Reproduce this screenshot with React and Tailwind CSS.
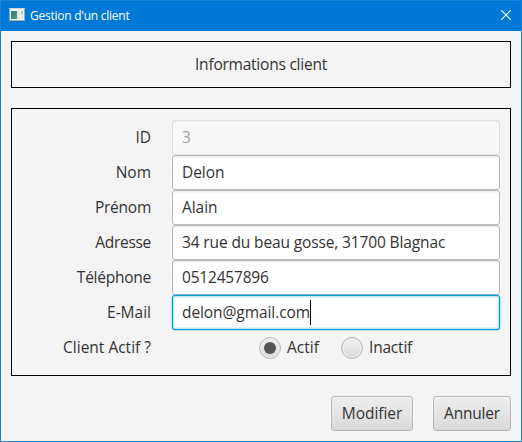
import React from "react";

const fields = [
  { label: "ID", value: "3", state: "disabled", ls: "tracking-[0px]", vs: "tracking-[0px]" },
  { label: "Nom", value: "Delon", state: "normal", ls: "tracking-[0px]", vs: "tracking-[-0.05px]" },
  { label: "Prénom", value: "Alain", state: "normal", ls: "tracking-[-0.25px]", vs: "tracking-[-0.05px]" },
  { label: "Adresse", value: "34 rue du beau gosse, 31700 Blagnac", state: "normal", ls: "tracking-[-0.3px]", vs: "tracking-[-0.13px]" },
  { label: "Téléphone", value: "0512457896", state: "normal", ls: "tracking-[-0.25px]", vs: "tracking-[-0.2px]" },
  { label: "E-Mail", value: "delon@gmail.com", state: "focused", ls: "tracking-[0px]", vs: "tracking-[-0.08px]" },
];

const boxStyles = {
  normal: "border-[#bababa] bg-white shadow-[inset_0_2px_2px_-1px_#e4e4e4]",
  disabled: "border-[#dddddd] bg-[#f8f8f8] text-[#a0a0a0] shadow-[inset_0_2px_2px_-1px_#eeeeee]",
  focused: "border-[#039ed3] bg-white shadow-[inset_0_0_0_1px_#c4e6f3,inset_0_0_0_2px_#e3f4fa,0_0_0_0.5px_#039ed380]",
};

function WindowIcon() {
  return (
    <svg width="16" height="14" viewBox="0 0 16 14" className="mb-[2px] block">
      <defs>
        <linearGradient id="pane" x1="0" y1="0" x2="1" y2="1">
          <stop offset="0" stopColor="#4a6f8e" />
          <stop offset="1" stopColor="#3da566" />
        </linearGradient>
      </defs>
      <rect x="0.5" width="15" height="13" rx="0.5" fill="#f1f1ef" />
      <rect x="0.5" width="15" height="1" fill="#d6d2cd" />
      <rect x="0.5" y="12" width="15" height="1" fill="#aaa9a5" />
      <rect x="2" y="3" width="6" height="8" fill="url(#pane)" />
      <rect x="8" y="3" width="3" height="8" fill="#e3e5e6" />
      <rect x="12" y="3" width="2" height="8" fill="#e3e8e5" />
      <rect x="12" y="3" width="2" height="3" fill="#9bcbb0" />
    </svg>
  );
}

function Radio({ label, checked, className }) {
  return (
    <div className="flex h-[22px] items-start gap-[6px]">
      <span className="flex size-[22px] items-center justify-center rounded-full border border-[#b8b8b8] bg-linear-to-b from-[#f0f0f0] to-[#dadada] shadow-[inset_0_0_0_1px_#eeeeee]">
        {checked && <span className="size-3 rounded-full bg-[#555555]" />}
      </span>
      <span className={className}>{label}</span>
    </div>
  );
}

export default function App() {
  return (
    <div className="flex h-[442px] w-[522px] flex-col border border-[#1883d7] bg-[#f4f4f4] font-['Open_Sans','Noto_Sans',sans-serif] text-[15.5px] leading-5 whitespace-nowrap text-[#333333]">
      <header className="flex h-[30px] shrink-0 items-center bg-[#0078d7] pr-[10px] pl-2 text-white">
        <WindowIcon />
        <span className="ml-[5px] text-[12px] tracking-[-0.25px]">Gestion d'un client</span>
        <svg width="10" height="10" viewBox="0 0 10 10" className="mb-[2px] ml-auto" stroke="white" strokeWidth="1.1">
          <path d="M0 0 10 10M10 0 0 10" />
        </svg>
      </header>
      <main className="flex flex-col px-[10px] pt-[10px]">
        <section className="flex h-[47px] items-center justify-center border border-black">
          <span className="pb-px tracking-[-0.23px]">Informations client</span>
        </section>
        <section className="mt-5 h-[268px] border border-black pt-[11px] pr-[10px]">
          {fields.map((f) => (
            <div key={f.label} className="flex h-[35px] items-center">
              <div className="flex w-[139px] justify-end pb-px">
                <span className={f.ls}>{f.label}</span>
              </div>
              <div className={"ml-[21px] flex h-[35px] w-[328px] items-center rounded-[3px] border pl-[9px] " + boxStyles[f.state]}>
                <span className={"pb-px " + f.vs}>{f.value}</span>
                {f.state === "focused" && <span className="h-[25px] w-px bg-black" />}
              </div>
            </div>
          ))}
          <div className="flex h-[35px] items-start pt-[7px]">
            <div className="flex w-[139px] justify-end">
              <span className="tracking-[0px]">Client Actif ?</span>
            </div>
            <div className="ml-[108px] flex">
              <div className="w-[82px]">
                <Radio label="Actif" checked className="tracking-[0px]" />
              </div>
              <Radio label="Inactif" className="tracking-[-0.2px]" />
            </div>
          </div>
        </section>
        <footer className="mt-5 flex justify-end gap-5">
          <button className="flex h-[35px] w-[82px] items-center justify-center rounded-[3px] border border-[#b8b8b8] bg-linear-to-b from-[#eeeeee] to-[#dadada] shadow-[inset_0_1px_0_#f8f8f8]">
            <span className="pb-px tracking-[-0.05px]">Modifier</span>
          </button>
          <button className="flex h-[35px] w-[78px] items-center justify-center rounded-[3px] border border-[#b8b8b8] bg-linear-to-b from-[#eeeeee] to-[#dadada] shadow-[inset_0_1px_0_#f8f8f8]">
            <span className="pb-px tracking-[-0.2px]">Annuler</span>
          </button>
        </footer>
      </main>
    </div>
  );
}
